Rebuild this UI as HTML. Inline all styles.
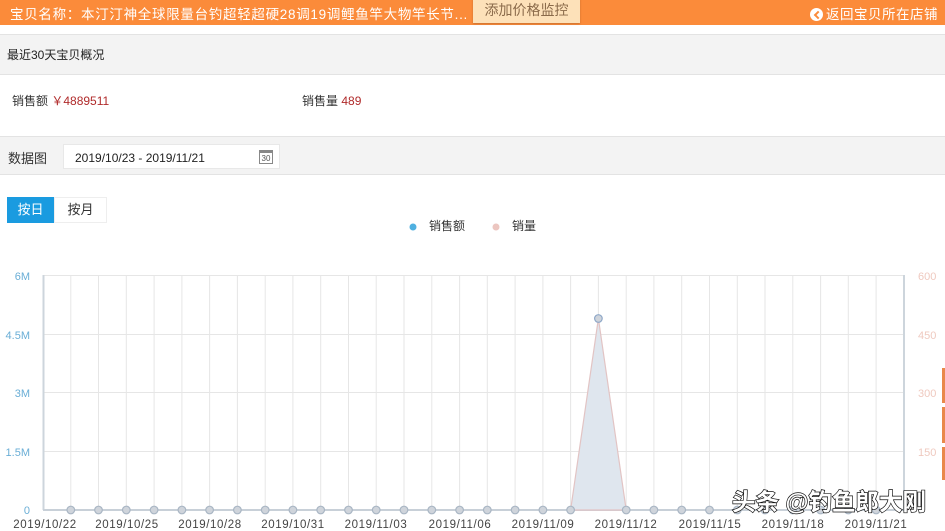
<!DOCTYPE html>
<html><head><meta charset="utf-8"><style>
*{margin:0;padding:0;box-sizing:border-box}
body{width:945px;height:531px;overflow:hidden;background:#fff;font-family:"Liberation Sans","Noto Sans CJK SC",sans-serif;position:relative;color:#333}
.top{position:absolute;left:0;top:0;width:945px;height:25px;background:#fb8b3a;color:#fff;font-size:13px}
.top .t{position:absolute;left:10px;top:3px;white-space:nowrap;font-size:13.5px;letter-spacing:0.7px}
.top .b{position:absolute;left:473px;top:-2px;width:107px;height:25px;background:#fde1b9;color:#8a6a4a;font-size:14px;text-align:center;line-height:25px;box-shadow:0 1px 2px rgba(0,0,0,.2)}
.top .r{position:absolute;left:810px;top:3px;white-space:nowrap;font-size:13.5px;letter-spacing:0.5px}
.top .r i{display:inline-block;width:13px;height:13px;border-radius:50%;background:#fff;vertical-align:-2px;margin-right:3px;position:relative}
.top .r i:after{content:"";position:absolute;left:5px;top:3.5px;width:4px;height:4px;border-left:2px solid #fb8b3a;border-bottom:2px solid #fb8b3a;transform:rotate(45deg)}
.sec{position:absolute;left:0;width:945px;background:#f3f3f3;border-top:1px solid #e3e3e3;border-bottom:1px solid #e3e3e3;font-size:12px}
.s1{top:34px;height:41px}
.s1 span{position:absolute;left:7px;top:11px;color:#222}
.row{position:absolute;top:92px;font-size:12px}
.row b{font-weight:normal;color:#b02a2a}
.s2{top:136px;height:39px}
.s2 .l{position:absolute;left:8px;top:11px;font-size:13px}
.s2 .d{position:absolute;left:63px;top:7px;width:217px;height:25px;background:#fff;border:1px solid #e8e8e8;font-size:12px;color:#222;padding:6px 0 0 11px}
.cal{position:absolute;right:6px;top:5px;width:14px;height:14px;border:1px solid #888;font-size:8px;text-align:center;line-height:11px;color:#555;border-top-width:3px}
.tab{position:absolute;top:197px;height:26px;font-size:13px;line-height:26px;text-align:center}
</style></head><body>
<div class="top"><span class="t">宝贝名称：本汀汀神全球限量台钓超轻超硬28调19调鲤鱼竿大物竿长节...</span><div class="b">添加价格监控</div><span class="r"><i></i>返回宝贝所在店铺</span></div>
<div class="sec s1"><span>最近30天宝贝概况</span></div>
<div class="row" style="left:12px">销售额 <b>￥4889511</b></div>
<div class="row" style="left:302px">销售量 <b>489</b></div>
<div class="sec s2"><span class="l">数据图</span><div class="d">2019/10/23 - 2019/11/21<div class="cal">30</div></div></div>
<div class="tab" style="left:7px;width:47px;background:#1a9be0;color:#fff">按日</div>
<div class="tab" style="left:54px;width:53px;border:1px solid #eee;color:#333;line-height:24px">按月</div>
<svg style="position:absolute;left:0;top:0" width="945" height="531" font-family="Liberation Sans,Noto Sans CJK SC,sans-serif">
<circle cx="413" cy="227" r="3.5" fill="#4fb0e0"/><text x="429" y="230" font-size="12" fill="#333">销售额</text>
<circle cx="496" cy="227" r="3.5" fill="#ecc6c0"/><text x="512" y="230" font-size="12" fill="#333">销量</text>
<g stroke="#e6e6e6" stroke-width="1">
<line x1="43" y1="275.5" x2="904" y2="275.5"/><line x1="43" y1="334.5" x2="904" y2="334.5"/><line x1="43" y1="392.5" x2="904" y2="392.5"/><line x1="43" y1="451.5" x2="904" y2="451.5"/>
<path d="M70.8 275V510M98.5 275V510M126.3 275V510M154.1 275V510M181.9 275V510M209.6 275V510M237.4 275V510M265.2 275V510M292.9 275V510M320.7 275V510M348.5 275V510M376.2 275V510M404 275V510M431.8 275V510M459.6 275V510M487.3 275V510M515.1 275V510M542.9 275V510M570.6 275V510M598.4 275V510M626.2 275V510M653.9 275V510M681.7 275V510M709.5 275V510M737.3 275V510M765 275V510M792.8 275V510M820.6 275V510M848.3 275V510M876.1 275V510"/>
</g>
<line x1="43.5" y1="275" x2="43.5" y2="510" stroke="#cdd5dc" stroke-width="2"/>
<line x1="904" y1="275" x2="904" y2="510" stroke="#cdd5dc" stroke-width="2"/>
<line x1="43" y1="510" x2="904" y2="510" stroke="#c8d0d8" stroke-width="2"/>
<polygon points="570.6,510 598.4,318.5 626.2,510" fill="#dfe6ee" stroke="#e2c4c4" stroke-width="1.2"/>
<g fill="#cfd4db" stroke="#a9b6c4" stroke-width="1.2">
<circle cx="70.8" cy="510" r="3.8"/><circle cx="98.5" cy="510" r="3.8"/><circle cx="126.3" cy="510" r="3.8"/><circle cx="154.1" cy="510" r="3.8"/><circle cx="181.9" cy="510" r="3.8"/><circle cx="209.6" cy="510" r="3.8"/><circle cx="237.4" cy="510" r="3.8"/><circle cx="265.2" cy="510" r="3.8"/><circle cx="292.9" cy="510" r="3.8"/><circle cx="320.7" cy="510" r="3.8"/><circle cx="348.5" cy="510" r="3.8"/><circle cx="376.2" cy="510" r="3.8"/><circle cx="404" cy="510" r="3.8"/><circle cx="431.8" cy="510" r="3.8"/><circle cx="459.6" cy="510" r="3.8"/><circle cx="487.3" cy="510" r="3.8"/><circle cx="515.1" cy="510" r="3.8"/><circle cx="542.9" cy="510" r="3.8"/><circle cx="570.6" cy="510" r="3.8"/><circle cx="598.4" cy="318.5" r="3.8" stroke="#8fa8c8"/><circle cx="626.2" cy="510" r="3.8"/><circle cx="653.9" cy="510" r="3.8"/><circle cx="681.7" cy="510" r="3.8"/><circle cx="709.5" cy="510" r="3.8"/><circle cx="737.3" cy="510" r="3.8"/><circle cx="765" cy="510" r="3.8"/><circle cx="792.8" cy="510" r="3.8"/><circle cx="820.6" cy="510" r="3.8"/><circle cx="848.3" cy="510" r="3.8"/><circle cx="876.1" cy="510" r="3.8"/>
</g>
<g font-size="11" fill="#6aaed6" text-anchor="end">
<text x="30" y="280">6M</text><text x="30" y="339">4.5M</text><text x="30" y="397">3M</text><text x="30" y="456">1.5M</text><text x="30" y="514">0</text>
</g>
<g font-size="11" fill="#efc9bf">
<text x="918" y="280">600</text><text x="918" y="339">450</text><text x="918" y="397">300</text><text x="918" y="456">150</text>
</g>
<g font-size="11.5" fill="#444" text-anchor="middle" letter-spacing="0.6">
<text x="45" y="528">2019/10/22</text><text x="127" y="528">2019/10/25</text><text x="210" y="528">2019/10/28</text><text x="293" y="528">2019/10/31</text><text x="376" y="528">2019/11/03</text><text x="460" y="528">2019/11/06</text><text x="543" y="528">2019/11/09</text><text x="626" y="528">2019/11/12</text><text x="710" y="528">2019/11/15</text><text x="793" y="528">2019/11/18</text><text x="876" y="528">2019/11/21</text>
</g>
<rect x="942" y="368" width="3" height="35" fill="#e9884a"/><rect x="942" y="407" width="3" height="36" fill="#e9884a"/><rect x="942" y="447" width="3" height="33" fill="#e9884a"/>
<text x="732" y="510" font-size="23.5" fill="#fff" stroke="#111" stroke-width="1.4" paint-order="stroke" font-weight="bold">头条 @钓鱼郎大刚</text>
</svg>
</body></html>
